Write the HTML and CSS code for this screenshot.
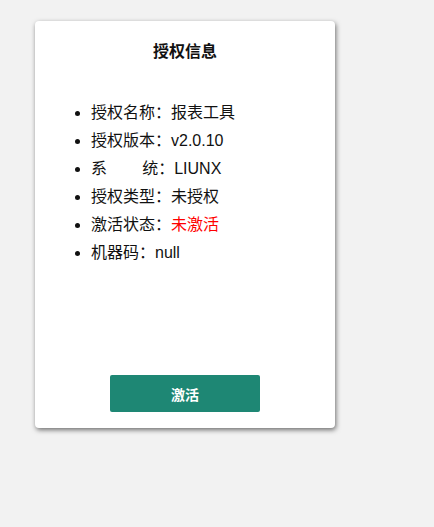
FILE: index.html
```html
<!DOCTYPE html>
<html lang="zh-CN">
<head>
  <meta charset="UTF-8" />
  <meta name="viewport" content="width=device-width, initial-scale=1.0"/>
  <title>授权信息</title>
  <link rel="stylesheet" href="styles.css">
</head>
<body>

  <div class="license-box">
    <h3>授权信息</h3>

    <ul class="license-list">
      <li>授权名称：报表工具</li>
      <li>授权版本：v2.0.10</li>
      <li>系&emsp;&emsp;&thinsp;统：LIUNX</li>
      <li>授权类型：未授权</li>
      <li>激活状态：<span class="inactive">未激活</span></li>
      <li>机器码：null</li>
    </ul>

    <button class="btn-activate">激活</button>
  </div>

</body>
</html>
```

FILE: styles.css
```css
body {
  margin: 0;
  padding: 21px 0 0 35px;
  font-family: "Liberation Sans", "Noto Sans CJK SC", sans-serif;
  background: #f2f2f2;
  min-height: 100vh;
  box-sizing: border-box;
}

.license-box {
  width: 300px;
  height: 407px;
  box-sizing: border-box;
  padding: 20px 16px 16px;
  background: white;
  border-radius: 4px;
  box-shadow: 1px 2px 5px rgba(0,0,0,0.55);
  display: flex;
  flex-direction: column;
  align-items: center;
}

.license-box h3 {
  margin: 0;
  font-size: 16px;
  line-height: 22px;
  font-weight: bold;
  color: #111;
}

.license-list {
  align-self: stretch;
  margin: 36px 0 0;
  padding-left: 40px;
  font-size: 16px;
  line-height: 28px;
  color: #111;
}

.inactive {
  color: #ff0000;
}

.btn-activate {
  margin-top: auto;
  width: 150px;
  height: 37px;
  background: #1e8774;
  color: white;
  border: none;
  border-radius: 2px;
  font-family: inherit;
  font-size: 14px;
  font-weight: bold;
}
```
